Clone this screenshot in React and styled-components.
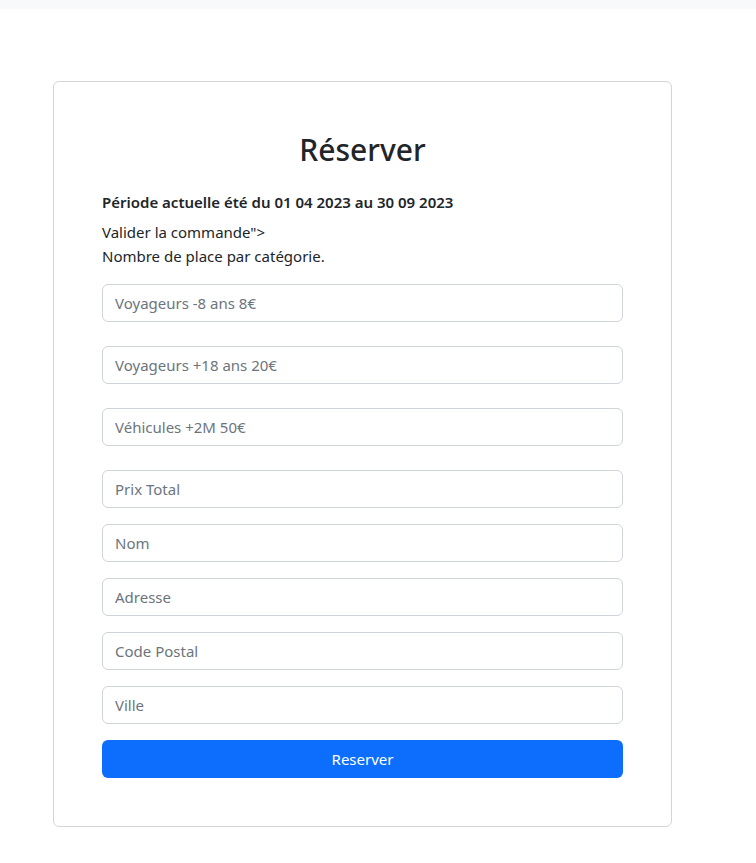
import styled, {createGlobalStyle} from 'styled-components';

const GlobalStyle = createGlobalStyle`
  * {
    box-sizing: border-box;
  }
  body {
    margin: 0;
    background: #fff;
    color: #212529;
    font-family: "Noto Sans", "Open Sans", sans-serif;
    font-size: 15px;
    line-height: 24px;
  }
`;

const TopBar = styled.div`
  height: 9px;
  background-color: #f8f9fa;
`;

const Card = styled.div`
  width: 619px;
  margin: 72px 0 0 53px;
  padding: 48px;
  border: 1px solid #d3d6d9;
  border-radius: 6px;
  background: #fff;
`;

const Title = styled.h1`
  margin: 2px 0 22px;
  text-align: center;
  font-size: 30px;
  font-weight: 500;
  line-height: 36px;
`;

const Period = styled.p`
  margin: 0 0 6px;
  font-weight: 600;
`;

const Text = styled.div``;

const Form = styled.form`
  display: flex;
  flex-direction: column;
  margin-top: 16px;
  gap: 24px;
`;

const Group = styled.div`
  display: flex;
  flex-direction: column;
  gap: 16px;
`;

const Input = styled.input`
  display: block;
  width: 100%;
  height: 38px;
  padding: 6px 12px;
  font-family: inherit;
  font-size: 15px;
  color: #212529;
  border: 1px solid #ced4da;
  border-radius: 6px;
  outline: none;

  &::placeholder {
    color: #6c757d;
    opacity: 1;
  }
`;

const Button = styled.button`
  display: block;
  width: 100%;
  height: 38px;
  border: none;
  border-radius: 6px;
  background-color: #0d6efd;
  color: #fff;
  font-family: inherit;
  font-size: 15px;
  cursor: pointer;
`;

const seats = ['Voyageurs -8 ans 8€', 'Voyageurs +18 ans 20€', 'Véhicules +2M 50€'];
const fields = ['Prix Total', 'Nom', 'Adresse', 'Code Postal', 'Ville'];

export default function App() {
  return (
    <>
      <GlobalStyle />
      <TopBar />
      <Card>
        <Title>Réserver</Title>
        <Period>Période actuelle été du 01 04 2023 au 30 09 2023</Period>
        <Text>Valider la commande"&gt;</Text>
        <Text>Nombre de place par catégorie.</Text>
        <Form onSubmit={(e) => e.preventDefault()}>
          {seats.map((s) => (
            <Input key={s} type="text" placeholder={s} />
          ))}
          <Group>
            {fields.map((f) => (
              <Input key={f} type="text" placeholder={f} />
            ))}
            <Button type="submit">Reserver</Button>
          </Group>
        </Form>
      </Card>
    </>
  );
}
